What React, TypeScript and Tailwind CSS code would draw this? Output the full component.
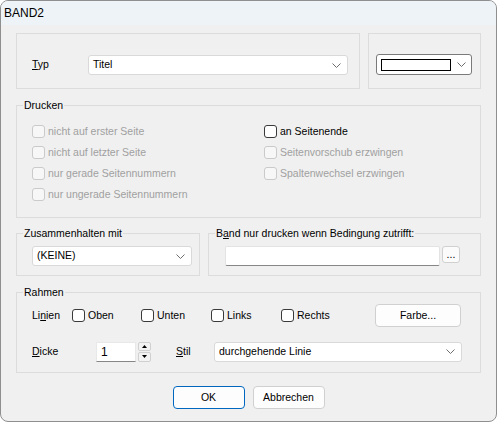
import React from 'react';

function Chevron() {
  return (
    <svg width="9" height="5" viewBox="0 0 9 5" className="shrink-0">
      <path d="M0.5 0.5 L4.5 4.5 L8.5 0.5" fill="none" stroke="#6e6e6e" strokeWidth="1" />
    </svg>
  );
}

function Group({ label, className, children }: { label?: React.ReactNode; className?: string; children?: React.ReactNode }) {
  return (
    <div className={`relative border border-[#dcdcdc] ${className ?? ''}`}>
      {label && (
        <span className="absolute left-[6px] -top-[8px] bg-[#f0f0f0] px-[1px] leading-[14px] text-black">{label}</span>
      )}
      {children}
    </div>
  );
}

function Check({ label, disabled, className }: { label: string; disabled?: boolean; className?: string }) {
  return (
    <div className={`flex items-center gap-[3px] ${className ?? ''}`}>
      <span
        className={
          disabled
            ? 'w-[13px] h-[13px] rounded-[3px] border border-[#cacaca] bg-[#f7f7f7] shrink-0'
            : 'w-[13px] h-[13px] rounded-[3px] border border-[#3a3a3a] bg-white shrink-0'
        }
      />
      <span className={disabled ? 'text-[#a0a0a0]' : 'text-black'}>{label}</span>
    </div>
  );
}

function Select({ value, className }: { value: string; className?: string }) {
  return (
    <div className={`flex items-center justify-between bg-white border border-[#d9d9d9] rounded-[3px] pl-[4px] pr-[6px] ${className ?? ''}`}>
      <span>{value}</span>
      <Chevron />
    </div>
  );
}

export default function App() {
  return (
    <div className="w-[497px] h-[422px] bg-white font-['Liberation_Sans',Arial,sans-serif] text-[10.5px] text-black">
      <div className="w-[497px] h-[422px] rounded-[8px] border border-[#8f8f8f] bg-[#f0f0f0] overflow-hidden flex flex-col">
        <div className="h-[24px] bg-[#edf3f7] flex items-center pl-[3px] text-[12px] shrink-0">BAND2</div>

        <div className="px-[15px] flex flex-col">
          {/* Typ row */}
          <div className="flex gap-[8px] mt-[8px]">
            <Group className="w-[344px] h-[56px] pl-[15px] pt-[21px]">
              <div className="flex items-center h-[20px]">
                <span className="w-[56px]">
                  <u>T</u>yp
                </span>
                <Select value="Titel" className="w-[260px] h-[20px]" />
              </div>
            </Group>
            <Group className="w-[113px] h-[56px] pl-[7px] pt-[20px]">
              <div className="w-[96px] h-[21px] bg-white border border-[#7a7a7a] rounded-[3px] flex items-center pl-[4px] pr-[5px]">
                <span className="w-[70px] h-[12px] border-[1.5px] border-black bg-white" />
                <span className="ml-auto">
                  <Chevron />
                </span>
              </div>
            </Group>
          </div>

          {/* Drucken */}
          <Group label="Drucken" className="h-[113px] mt-[16px] pl-[15px] pt-[15px]">
            <div className="flex">
              <div className="w-[232px] flex flex-col">
                <Check disabled label="nicht auf erster Seite" className="h-[21px]" />
                <Check disabled label="nicht auf letzter Seite" className="h-[21px]" />
                <Check disabled label="nur gerade Seitennummern" className="h-[21px]" />
                <Check disabled label="nur ungerade Seitennummern" className="h-[21px]" />
              </div>
              <div className="flex flex-col">
                <Check label="an Seitenende" className="h-[21px]" />
                <Check disabled label="Seitenvorschub erzwingen" className="h-[21px]" />
                <Check disabled label="Spaltenwechsel erzwingen" className="h-[21px]" />
              </div>
            </div>
          </Group>

          {/* Zusammenhalten / Bedingung */}
          <div className="flex gap-[8px] mt-[15px]">
            <Group label="Zusammenhalten mit" className="w-[184px] h-[43px] pl-[15px] pt-[12px]">
              <Select value="(KEINE)" className="w-[160px] h-[20px]" />
            </Group>
            <Group
              label={
                <>
                  B<u>a</u>nd nur drucken wenn Bedingung zutrifft:
                </>
              }
              className="w-[273px] h-[43px] pl-[16px] pt-[12px]"
            >
              <div className="flex items-start">
                <div className="w-[215px] h-[20px] bg-white border border-[#e3e3e3] border-b-[#868686] rounded-[2px]" />
                <div className="ml-[2px] w-[18px] h-[17px] bg-[#fbfbfb] border border-[#d0d0d0] rounded-[3px] flex items-end justify-center leading-[12px] pb-[2px]">
                  ...
                </div>
              </div>
            </Group>
          </div>

          {/* Rahmen */}
          <Group label="Rahmen" className="h-[81px] mt-[16px] pl-[15px] pt-[11px]">
            <div className="flex items-center h-[23px]">
              <span className="w-[40px]">
                Li<u>n</u>ien
              </span>
              <Check label="Oben" className="w-[69px]" />
              <Check label="Unten" className="w-[70px]" />
              <Check label="Links" className="w-[70px]" />
              <Check label="Rechts" className="w-[70px]" />
              <div className="ml-[24px] w-[86px] h-[23px] bg-[#fdfdfd] border border-[#d0d0d0] rounded-[4px] flex items-center justify-center">
                Farbe...
              </div>
            </div>
            <div className="flex items-center h-[21px] mt-[14px]">
              <span className="w-[64px]">
                <u>D</u>icke
              </span>
              <div className="w-[40px] h-[20px] bg-white border border-[#e8e8e8] border-b-[#868686] flex items-center pl-[4px] text-[12px]">
                1
              </div>
              <div className="ml-[2px] w-[13px] h-[20px] flex flex-col gap-[1px]">
                <div className="flex-1 bg-[#f3f3f3] border border-[#d0d0d0] rounded-[2px] flex items-center justify-center">
                  <svg width="5" height="3" viewBox="0 0 5 3">
                    <path d="M0 3 L2.5 0 L5 3 Z" fill="#000" />
                  </svg>
                </div>
                <div className="flex-1 bg-[#f3f3f3] border border-[#d0d0d0] rounded-[2px] flex items-center justify-center">
                  <svg width="5" height="3" viewBox="0 0 5 3">
                    <path d="M0 0 L5 0 L2.5 3 Z" fill="#000" />
                  </svg>
                </div>
              </div>
              <span className="ml-[25px] w-[38px]">
                <u>S</u>til
              </span>
              <Select value="durchgehende Linie" className="w-[248px] h-[20px]" />
            </div>
          </Group>

          {/* Buttons */}
          <div className="flex justify-center gap-[8px] mt-[13px]">
            <div className="w-[72px] h-[23px] bg-[#fdfdfd] border border-[#0067c0] rounded-[4px] flex items-center justify-center">
              OK
            </div>
            <div className="w-[72px] h-[23px] bg-[#fdfdfd] border border-[#d0d0d0] rounded-[4px] flex items-center justify-center">
              Abbrechen
            </div>
          </div>
        </div>
      </div>
    </div>
  );
}
